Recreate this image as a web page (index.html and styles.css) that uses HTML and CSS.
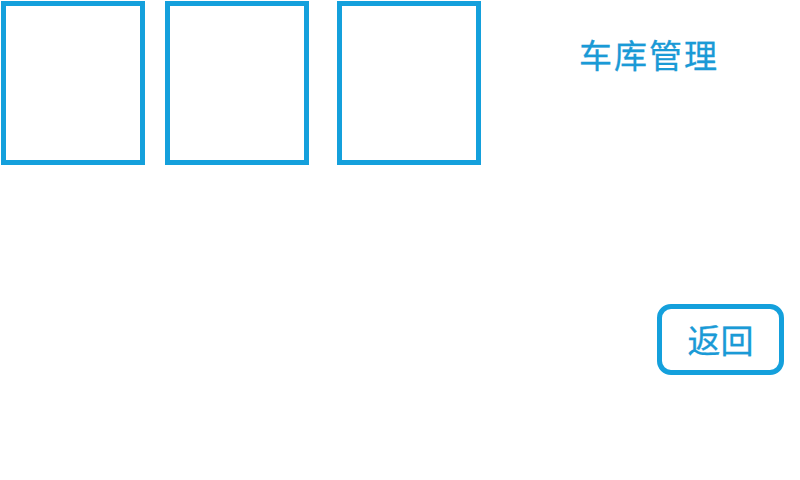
FILE: index.html
```html
<!DOCTYPE html>
<html lang="zh-CN">
<head>
    <meta charset="UTF-8">
    <meta name="viewport" content="width=device-width, initial-scale=1.0">
    <title>车库管理</title>
    <link rel="stylesheet" href="styles.css">
</head>
<body>
    <div class="page">
        <div class="top-row">
            <div class="slot slot-1"></div>
            <div class="slot slot-2"></div>
            <div class="slot slot-3"></div>
            <h1 class="title">车库管理</h1>
        </div>
        <div class="actions">
            <button class="back-btn">返回</button>
        </div>
    </div>
</body>
</html>
```

FILE: styles.css
```css
body {
    margin: 0;
    background: #ffffff;
    font-family: "Noto Sans CJK SC", "Noto Sans", sans-serif;
    color: #1a9ad6;
}
.page {
    width: 800px;
    height: 480px;
    padding: 1px 16px 0 1px;
    box-sizing: border-box;
}
.top-row {
    display: flex;
    align-items: flex-start;
}
.slot {
    width: 144px;
    height: 164px;
    border: 5px solid #14a0dc;
    box-sizing: border-box;
}
.slot-2 {
    margin-left: 20px;
}
.slot-3 {
    margin-left: 28px;
}
.title {
    margin: 35px 0 0 98px;
    font-size: 33px;
    font-weight: normal;
    line-height: 36px;
    letter-spacing: 2px;
    color: #1a9ad6;
    -webkit-text-stroke: 0.3px #1a9ad6;
}
.actions {
    display: flex;
    justify-content: flex-end;
    margin-top: 139px;
}
.back-btn {
    width: 127px;
    height: 71px;
    border: 5px solid #14a0dc;
    border-radius: 14px;
    background: #ffffff;
    color: #1a9ad6;
    font-family: "Noto Sans CJK SC", sans-serif;
    font-size: 33px;
    line-height: 1;
    padding: 0;
    letter-spacing: 0;
    -webkit-text-stroke: 0.3px #1a9ad6;
    cursor: pointer;
}
```
